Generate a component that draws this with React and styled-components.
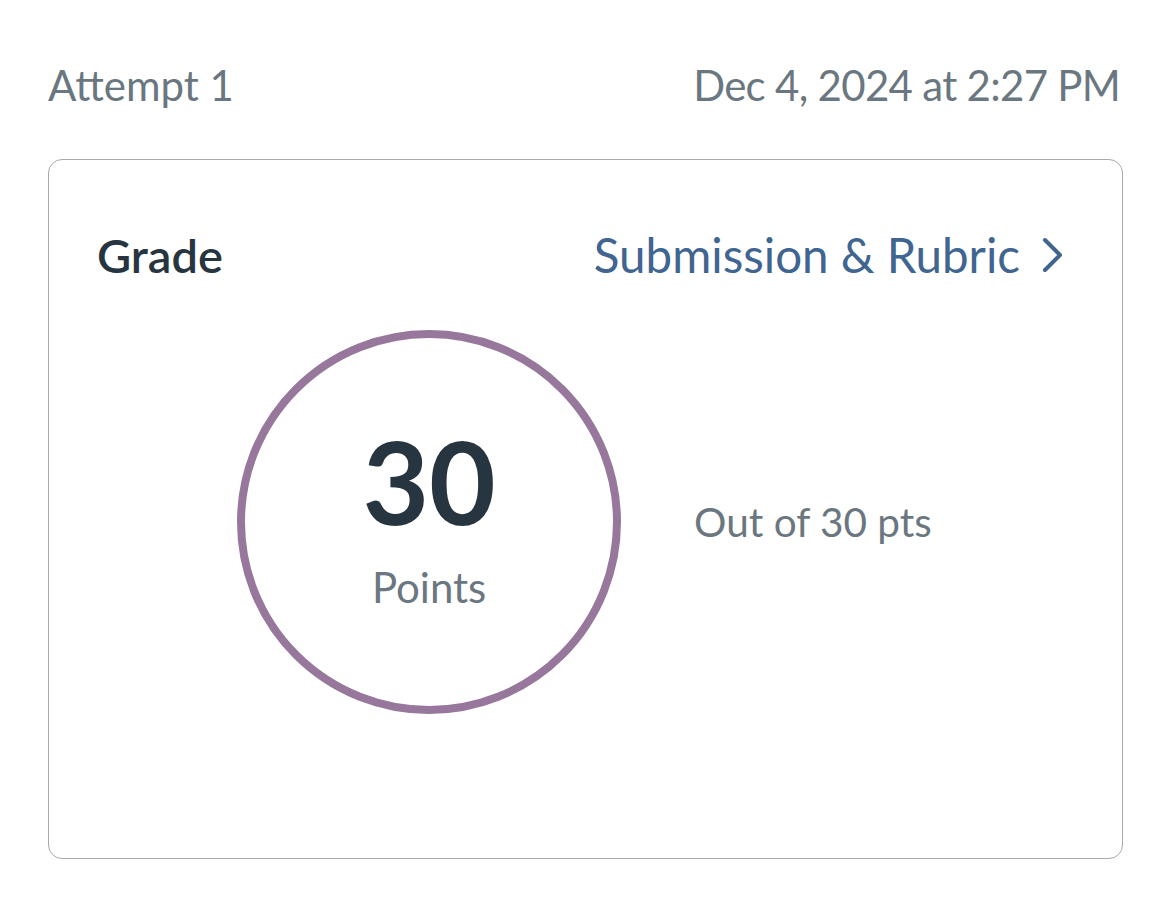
import React from "react";
import styled, { createGlobalStyle } from "styled-components";

const GlobalStyle = createGlobalStyle`
  body {
    margin: 0;
    background: #ffffff;
    font-family: "Lato", "Open Sans", sans-serif;
  }
`;

const Page = styled.div`
  padding: 60px 48px 0 48px;
`;

const AttemptHeader = styled.div`
  display: flex;
  justify-content: space-between;
  align-items: center;
  width: 1072px;
  font-size: 42px;
  line-height: 1.2;
  color: #6b7780;
`;

const SubmittedAt = styled.span`
  letter-spacing: -0.7px;
`;

const Card = styled.div`
  margin-top: 49px;
  width: 1075px;
  height: 700px;
  border: 1.5px solid #a9a9ae;
  border-radius: 14px;
  box-sizing: border-box;
  padding: 66px 48px 0 48px;
`;

const CardHeader = styled.div`
  display: flex;
  justify-content: space-between;
  align-items: center;
`;

const Title = styled.div`
  font-size: 47px;
  font-weight: 600;
  line-height: 1.2;
  color: #273540;
`;

const DetailsLink = styled.a`
  display: flex;
  align-items: center;
  gap: 22px;
  font-size: 47.5px;
  line-height: 1.2;
  color: #3f6590;
  text-decoration: none;
  margin-right: 10px;
`;

const ScoreRow = styled.div`
  display: flex;
  align-items: center;
  justify-content: center;
  gap: 73px;
  margin-top: 47px;
  padding-right: 2px;
`;

const ScoreRing = styled.div`
  width: 384px;
  height: 384px;
  border-radius: 50%;
  border: 8px solid #97779b;
  box-sizing: border-box;
  display: flex;
  flex-direction: column;
  align-items: center;
  justify-content: center;
`;

const ScoreValue = styled.div`
  font-size: 115px;
  font-weight: 700;
  line-height: 1;
  color: #273540;
  margin-top: -10px;
`;

const ScoreUnit = styled.div`
  font-size: 42px;
  line-height: 1.2;
  color: #6b7780;
  margin-top: 24px;
`;

const OutOf = styled.div`
  font-size: 40.5px;
  line-height: 1.2;
  color: #6b7780;
`;

function Chevron() {
  return (
    <svg width="22" height="36" viewBox="0 0 22 36" fill="none">
      <path
        d="M3 3 L18 18 L3 33"
        stroke="#3f6590"
        strokeWidth="4"
        strokeLinecap="round"
        strokeLinejoin="round"
      />
    </svg>
  );
}

export default function App() {
  return (
    <Page>
      <GlobalStyle />
      <AttemptHeader>
        <span>Attempt 1</span>
        <SubmittedAt>Dec 4, 2024 at 2:27{"\u202F"}PM</SubmittedAt>
      </AttemptHeader>
      <Card>
        <CardHeader>
          <Title>Grade</Title>
          <DetailsLink href="#">
            Submission &amp; Rubric
            <Chevron />
          </DetailsLink>
        </CardHeader>
        <ScoreRow>
          <ScoreRing>
            <ScoreValue>30</ScoreValue>
            <ScoreUnit>Points</ScoreUnit>
          </ScoreRing>
          <OutOf>Out of 30 pts</OutOf>
        </ScoreRow>
      </Card>
    </Page>
  );
}
